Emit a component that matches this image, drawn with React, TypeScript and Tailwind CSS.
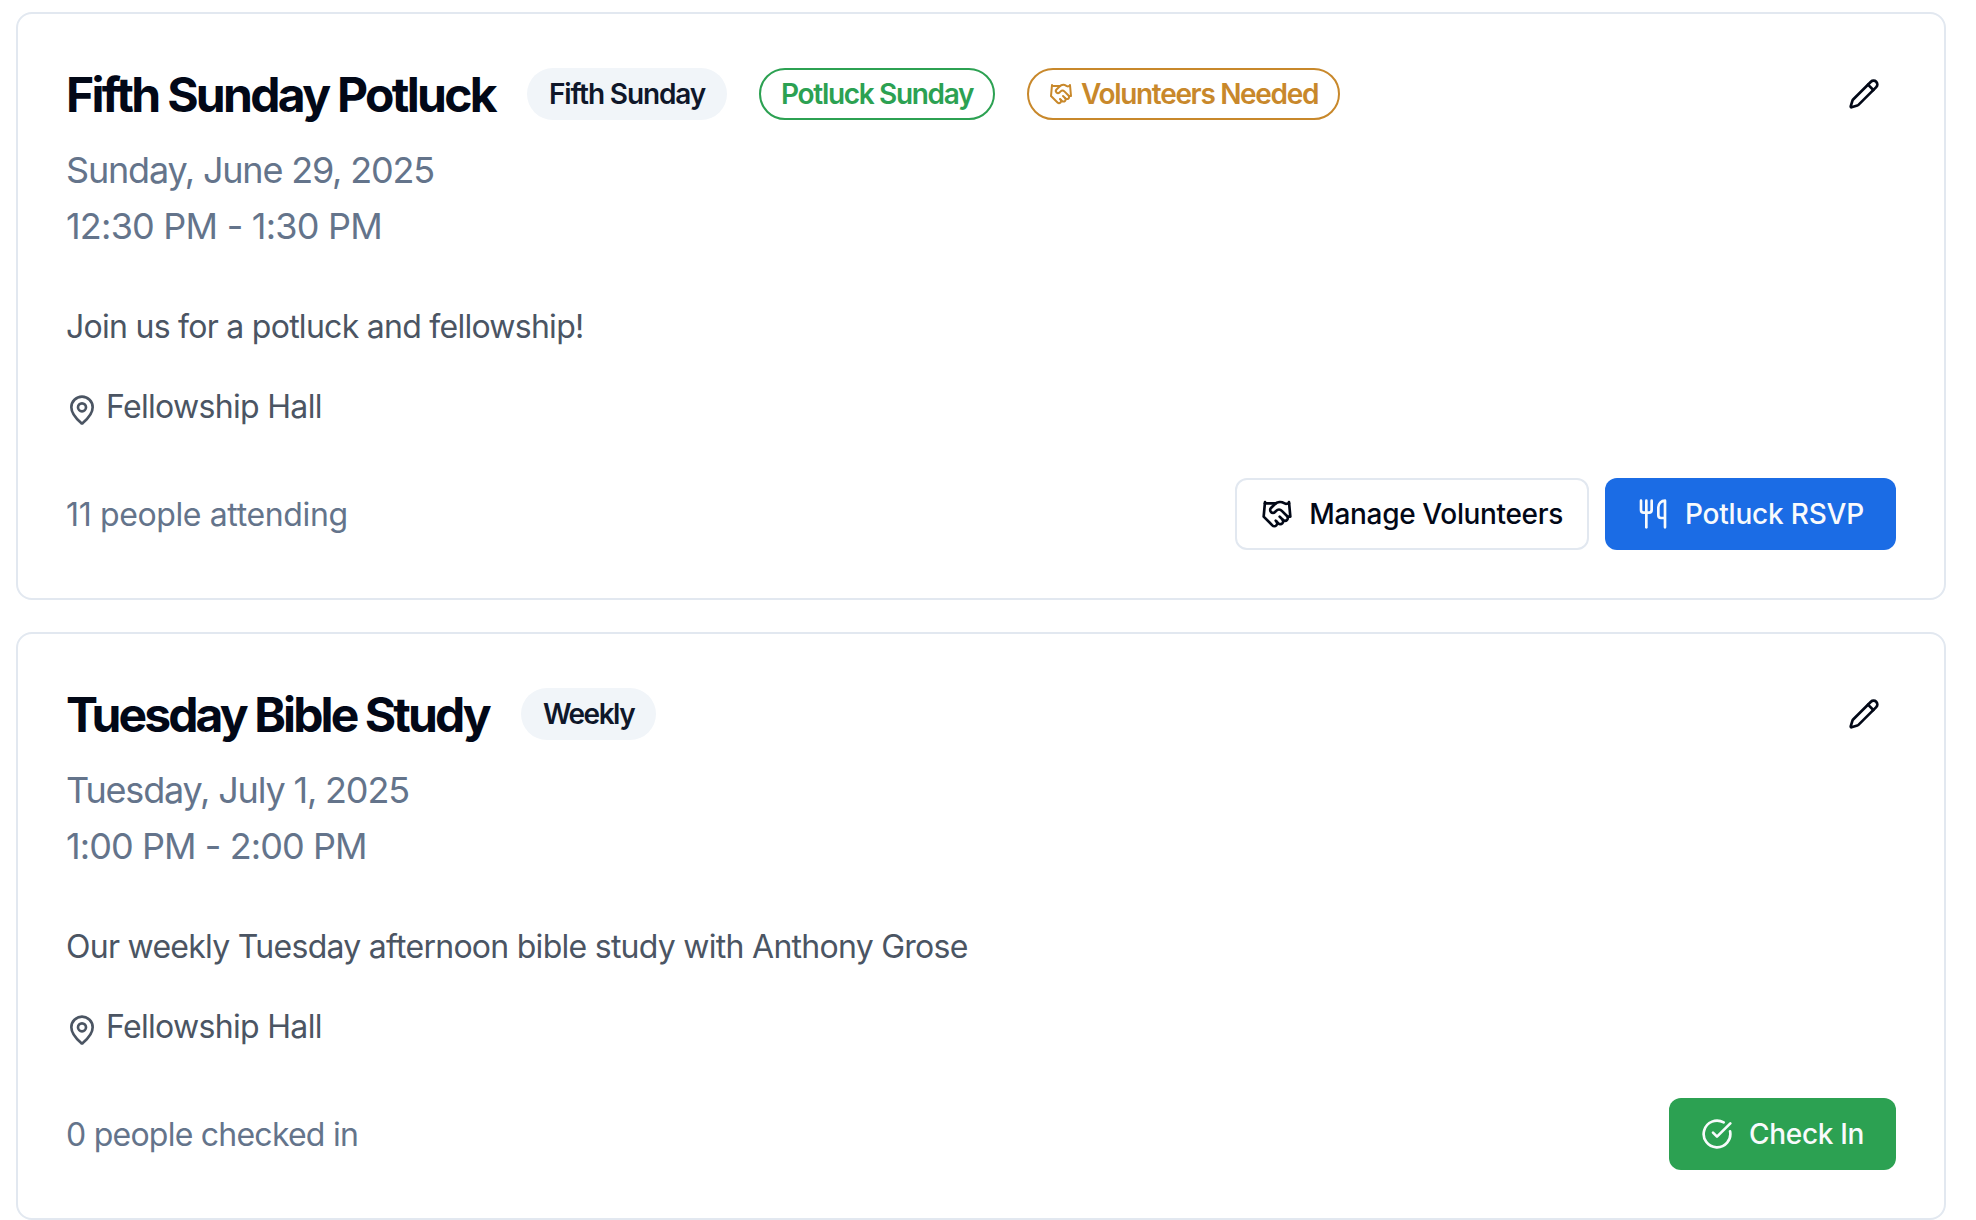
import type { ReactNode } from 'react';
import { CircleCheckBig, Handshake, MapPin, Pencil, Utensils } from 'lucide-react';

type EventCardProps = {
  title: ReactNode;
  badges: ReactNode;
  date: ReactNode;
  time: ReactNode;
  description: ReactNode;
  location: string;
  attendance: ReactNode;
  actions: ReactNode;
};

function Badge({ className, children }: { className: string; children: ReactNode }) {
  return (
    <span
      className={`flex h-[52px] items-center rounded-full border-2 px-5 text-[28px] leading-9 font-semibold whitespace-nowrap ${className}`}
    >
      {children}
    </span>
  );
}

function Button({ className, children }: { className: string; children: ReactNode }) {
  return (
    <button
      type="button"
      className={`flex h-[72px] items-center gap-4 rounded-xl text-[28px] leading-10 font-medium whitespace-nowrap ${className}`}
    >
      {children}
    </button>
  );
}

function EventCard({ title, badges, date, time, description, location, attendance, actions }: EventCardProps) {
  return (
    <article className="rounded-2xl border-2 border-[#e2e8f0] bg-white p-12">
      <header className="flex h-16 items-center justify-between">
        <div className="flex items-center gap-8">
          <h3 className="pt-px text-5xl leading-[48px] font-bold whitespace-nowrap">{title}</h3>
          {badges}
        </div>
        <button type="button" aria-label="Edit event" className="flex size-16 items-center justify-center">
          <Pencil size={32} />
        </button>
      </header>
      <div className="mt-4 text-4xl leading-[56px] text-[#64748b]">
        <p>{date}</p>
        <p>{time}</p>
      </div>
      <p className="mt-[49px] text-[32px] leading-[48px] text-[#4b5563]">{description}</p>
      <div className="mt-8 flex gap-2 text-[32px] leading-[48px] text-[#4b5563]">
        <MapPin size={32} className="mt-[11px]" />
        <span className="tracking-[-0.68px]">{location}</span>
      </div>
      <footer className="mt-[47px] flex items-center justify-between">
        <p className="pt-0.5 text-[32px] leading-[48px] text-[#64748b]">{attendance}</p>
        <div className="flex gap-4">{actions}</div>
      </footer>
    </article>
  );
}

export default function App() {
  return (
    <main className="flex min-h-[1220px] w-[1976px] flex-col gap-8 bg-white pt-3 pr-[30px] pl-4 font-['Inter',sans-serif] text-[#020817]">
      <EventCard
        title={<span className="tracking-[-2.7px]">Fifth Sunday Potluck</span>}
        badges={
          <>
            <Badge className="border-transparent bg-[#f1f5f9] tracking-[-1.14px] text-[#0f172a]">Fifth Sunday</Badge>
            <Badge className="border-[#2ca152] tracking-[-1.33px] text-[#2ca152]">Potluck Sunday</Badge>
            <Badge className="border-[#c8882b] tracking-[-1.33px] text-[#c8882b]">
              <Handshake size={24} className="mr-2" />
              Volunteers Needed
            </Badge>
          </>
        }
        date={<span className="tracking-[-1.2px]">Sunday, June 29, 2025</span>}
        time={<span className="tracking-[-0.78px]">12:30 PM - 1:30 PM</span>}
        description={<span className="tracking-[-0.73px]">Join us for a potluck and fellowship!</span>}
        location="Fellowship Hall"
        attendance={<span className="tracking-[-0.37px]">11 people attending</span>}
        actions={
          <>
            <Button className="border-2 border-[#e2e8f0] bg-white px-6 tracking-[-0.35px]">
              <Handshake size={32} />
              Manage Volunteers
            </Button>
            <Button className="bg-[#1b6ce5] px-8 tracking-[-0.2px] text-[#f8fafc]">
              <Utensils size={32} />
              Potluck RSVP
            </Button>
          </>
        }
      />
      <EventCard
        title={<span className="tracking-[-2.9px]">Tuesday Bible Study</span>}
        badges={<Badge className="border-transparent bg-[#f1f5f9] tracking-[-1.5px] text-[#0f172a]">Weekly</Badge>}
        date={<span className="tracking-[-1.17px]">Tuesday, July 1, 2025</span>}
        time={<span className="tracking-[-0.92px]">1:00 PM - 2:00 PM</span>}
        description={
          <span className="tracking-[-0.73px]">Our weekly Tuesday afternoon bible study with Anthony Grose</span>
        }
        location="Fellowship Hall"
        attendance={<span className="tracking-[-0.76px]">0 people checked in</span>}
        actions={
          <Button className="bg-[#2ca152] px-8 tracking-[-0.33px] text-[#f8fafc]">
            <CircleCheckBig size={32} />
            Check In
          </Button>
        }
      />
    </main>
  );
}
